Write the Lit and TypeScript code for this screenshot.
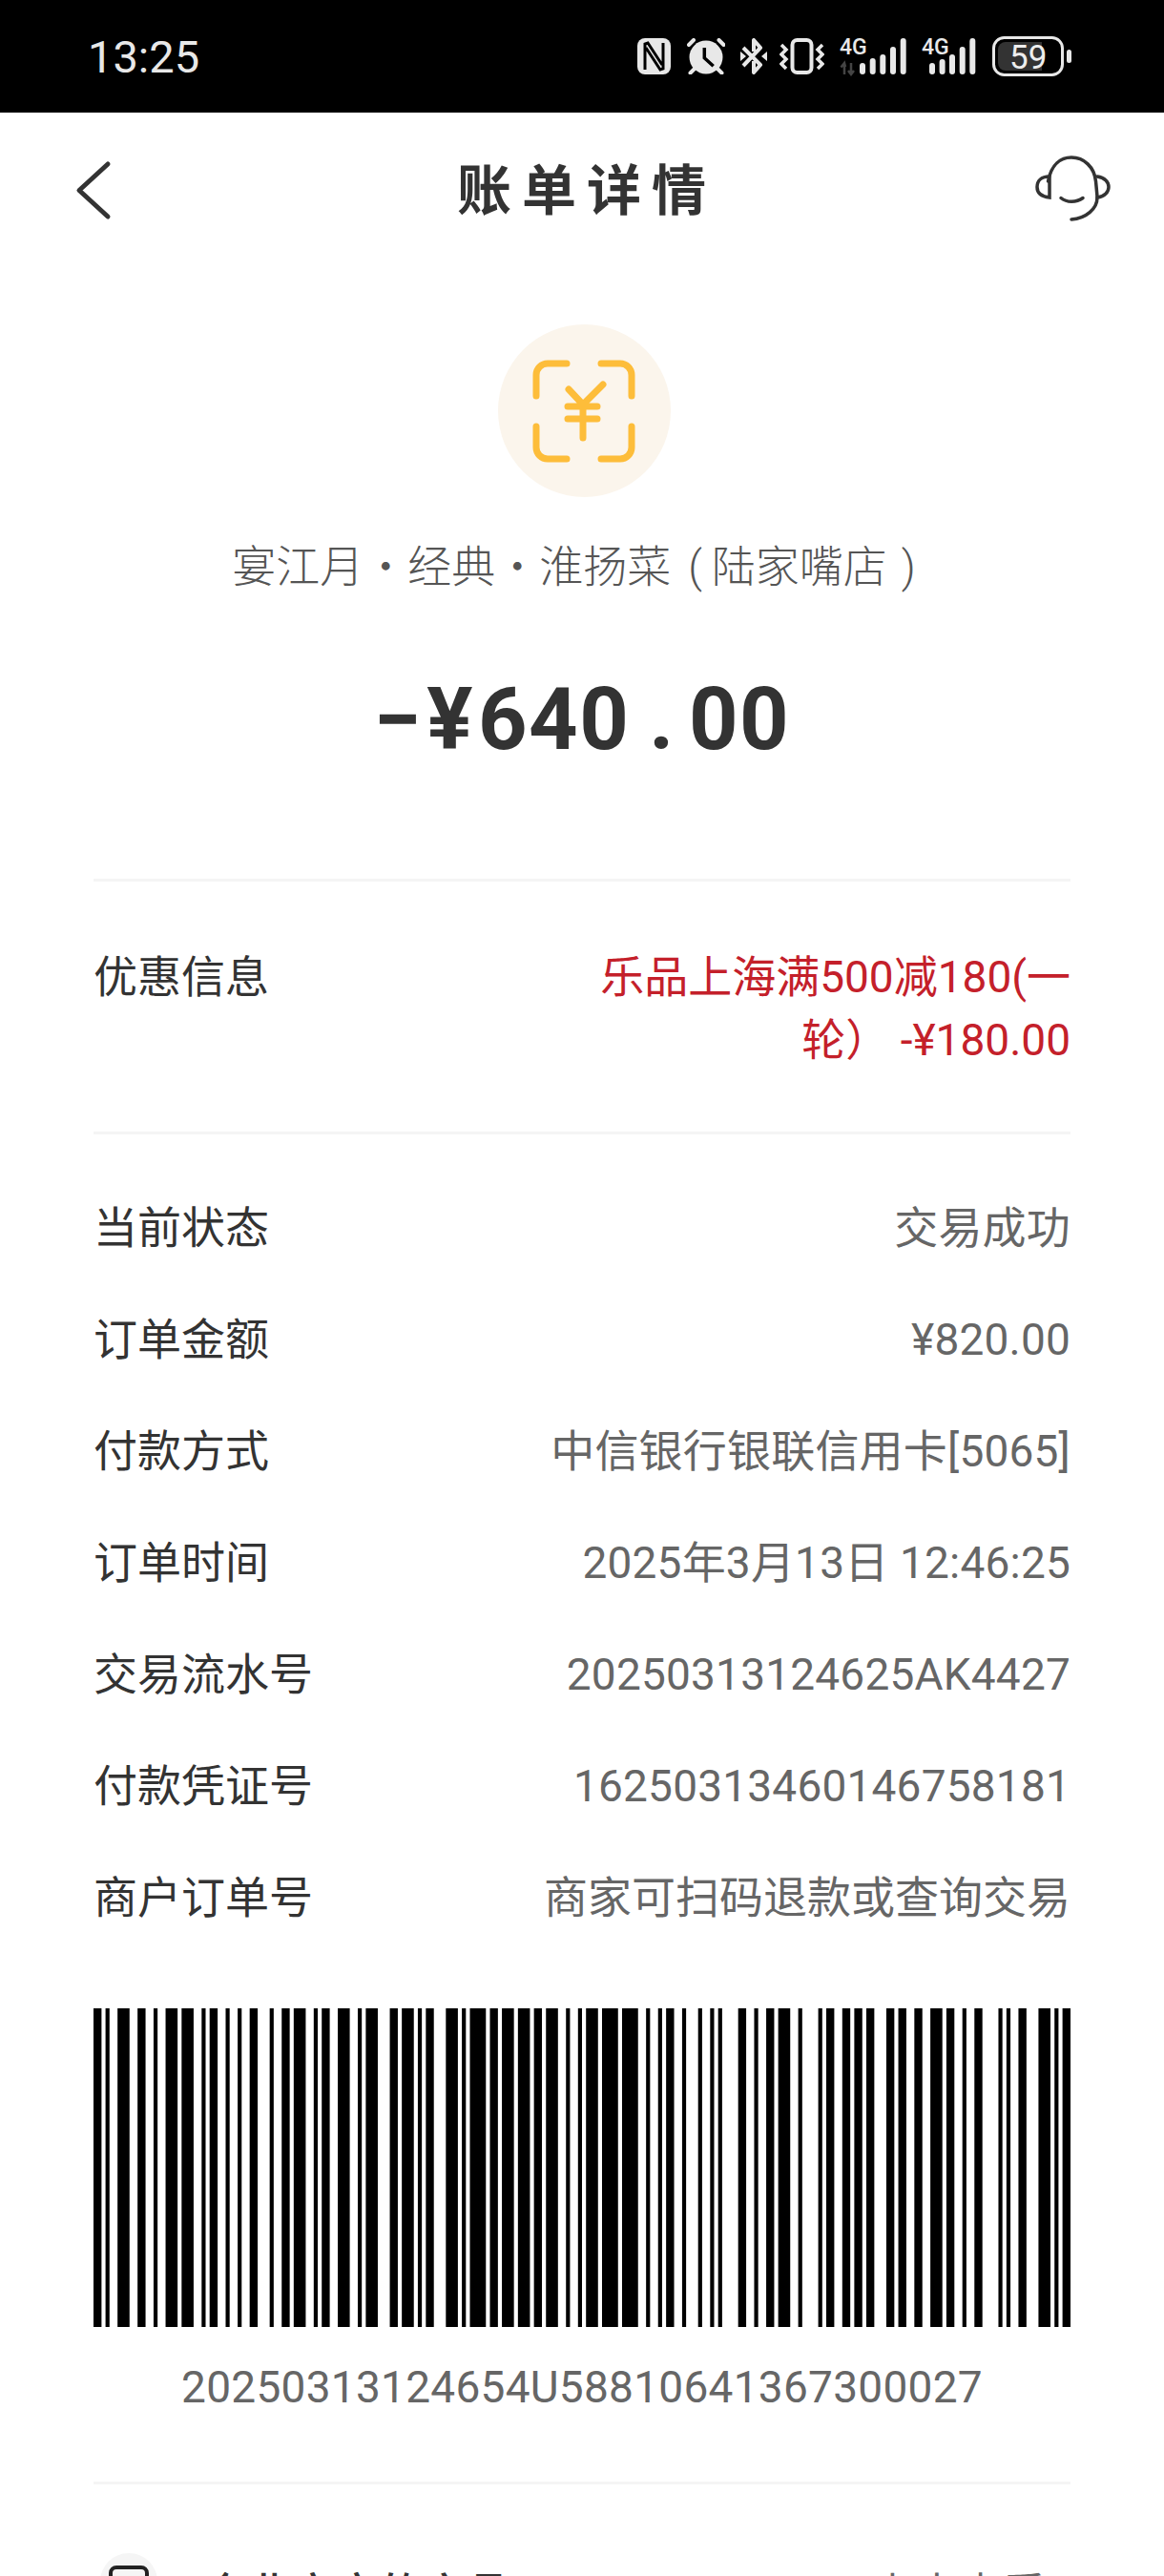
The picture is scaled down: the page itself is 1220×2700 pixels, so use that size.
import { LitElement, html, css, svg } from "lit";
import { customElement } from "lit/decorators.js";

// bar, gap, bar, gap ... in barcode modules
const BARS = [
  2,1,1,2,3,2,2,2,1,2,3,1,3,2,1,1,2,2,1,2,1,2,2,3,1,2,2,1,3,2,1,1,2,2,3,2,1,1,3,3,
  2,1,3,1,1,1,2,3,3,1,1,1,4,1,2,1,3,1,3,1,2,1,3,2,1,2,1,1,3,1,4,1,4,2,1,2,1,1,2,2,
  1,3,1,2,1,1,1,4,2,2,1,2,2,1,3,2,1,4,1,1,2,2,2,1,2,1,2,3,2,1,2,2,2,2,3,1,2,2,1,2,
  2,4,1,1,1,2,2,3,3,1,1,1,2,
];

const ROWS = [
  ["当前状态", "交易成功"],
  ["订单金额", "¥820.00"],
  ["付款方式", "中信银行银联信用卡[5065]"],
  ["订单时间", "2025年3月13日 12:46:25"],
  ["交易流水号", "20250313124625AK4427"],
  ["付款凭证号", "16250313460146758181"],
  ["商户订单号", "商家可扫码退款或查询交易"],
];

@customElement("app-root")
export class AppRoot extends LitElement {
  static styles = css`
    :host {
      display: block;
      width: 1220px;
      height: 2700px;
      overflow: hidden;
      background: #fff;
      font-family: Roboto, "Noto Sans CJK SC", sans-serif;
      font-size: 46px;
      color: #333;
    }

    .status {
      height: 118px;
      background: #000;
      color: #e8e8e8;
      display: flex;
      align-items: center;
      justify-content: space-between;
      padding: 0 97px 0 92px;
      box-sizing: border-box;
    }
    .time { font-size: 47px; }
    .status-icons { display: flex; align-items: center; gap: 16px; }
    .status-icons svg { display: block; fill: #e8e8e8; }
    .status-icons .near { margin-left: -3px; }
    .status-icons text { font-family: Roboto, sans-serif; }

    .nav {
      height: 164px;
      display: grid;
      grid-template-columns: 1fr auto 1fr;
      align-items: center;
      padding: 0 40px 0 78px;
    }
    .nav svg { display: block; fill: none; stroke: #333; stroke-linecap: round; }
    .nav .help { justify-self: end; }
    .title {
      font-size: 57px;
      font-weight: 700;
      letter-spacing: 11px;
      line-height: 64px;
      margin: 2px 0 0 -28px;
    }

    .head { display: flex; flex-direction: column; align-items: center; padding-top: 58px; }
    .badge {
      width: 181px;
      height: 181px;
      margin-left: 4px;
      border-radius: 50%;
      background: #fbf5ec;
      display: flex;
      align-items: center;
      justify-content: center;
    }
    .badge svg { fill: none; stroke: #fdbd3a; stroke-width: 7; stroke-linecap: round; stroke-linejoin: round; }
    .merchant {
      margin-top: 46px;
      font-weight: 300;
      color: #555;
      line-height: 54px;
    }
    .merchant .open { margin: 0 10px 0 18px; }
    .merchant .close { margin: 0 17px 0 15px; }
    .amount {
      margin-top: 81px;
      font-size: 90px;
      font-weight: 700;
      line-height: 106px;
      letter-spacing: 1.5px;
    }
    .amount .sign { margin-right: 4px; }
    .amount .dot { margin: 0 14px 0 20px; }

    .content { padding: 0 98px; }
    .rule { height: 3px; background: #f5f5f5; }
    .rule.top { margin-top: 113px; }

    .promo {
      display: flex;
      justify-content: space-between;
      padding: 67px 0 63px;
      line-height: 66px;
    }
    .promo .red { width: 500px; text-align: right; color: #c4202a; }

    .rows { display: grid; gap: 51px; padding: 65px 0 0; }
    .row { display: flex; justify-content: space-between; line-height: 66px; }
    .row .value { color: #666; }
    .row:not(:last-child) .value { letter-spacing: 0.2px; }

    .barcode { display: block; margin-top: 83px; width: 1024px; height: 334px; fill: #000; }
    .code { text-align: center; color: #666; line-height: 66px; margin-top: 30px; letter-spacing: 0.27px; }
    .rule.last { margin-top: 66px; }

    .more {
      display: flex;
      align-items: flex-start;
      justify-content: space-between;
      padding-top: 72px;
      line-height: 66px;
    }
    .more-left { display: flex; align-items: flex-start; gap: 48px; }
    .more-icon {
      width: 60px;
      height: 60px;
      border-radius: 50%;
      background: #f5f5f5;
      display: flex;
      justify-content: center;
      padding-top: 13px;
      box-sizing: border-box;
      margin-left: 7px;
    }
    .more-icon span {
      display: block;
      width: 42px;
      height: 50px;
      box-sizing: border-box;
      border: 4px solid #222;
      border-radius: 8px;
    }
    .more-name { font-weight: 500; margin-top: 10px; }
    .more-link { color: #666; margin-top: 10px; }
  `;

  private renderBars() {
    let x = 0;
    const rects = BARS.map((w, i) => {
      const at = x;
      x += w;
      return i % 2 === 0 ? svg`<rect x=${at} y="0" width=${w} height="10"></rect>` : null;
    });
    return html`<svg class="barcode" viewBox="0 0 ${x} 10" preserveAspectRatio="none">${rects}</svg>`;
  }

  private renderStatusIcons() {
    return html`
      <div class="status-icons">
        <svg width="36" height="38" viewBox="0 0 36 38">
          <rect x="0" y="0" width="35" height="38" rx="8"></rect>
          <path d="M8 33V6l3-1 15 23M27 5v27l-3 1L9 10" fill="none" stroke="#000" stroke-width="3"></path>
        </svg>
        <svg width="40" height="38" viewBox="0 0 40 38">
          <circle cx="20" cy="20" r="17.5"></circle>
          <path d="M18.3 10v10.7l9.4 8.6" fill="none" stroke="#000" stroke-width="3.5"></path>
          <path d="M2 7l5-5M33.5 2l5 5M3.5 36.5l5-5M31.5 31.5l5 5" fill="none" stroke="#e8e8e8" stroke-width="4" stroke-linecap="round"></path>
        </svg>
        <svg width="28" height="38" viewBox="0 0 28 38">
          <path d="M3 10l18 18-7 8V24M3 29l18-19-7-8v12" fill="none" stroke="#e8e8e8" stroke-width="4" stroke-linejoin="round"></path>
          <path d="M0 14l6 5-6 5zM28 14l-6 5 6 5z"></path>
        </svg>
        <svg class="near" width="47" height="38" viewBox="0 0 47 38">
          <rect x="13.5" y="2" width="20" height="34" rx="5" fill="none" stroke="#e8e8e8" stroke-width="4"></rect>
          <path d="M2 7l5 5-5 5 5 5-5 5 5 5M45 7l-5 5 5 5-5 5 5 5-5 5" fill="none" stroke="#e8e8e8" stroke-width="3.5"></path>
        </svg>
        <svg width="70" height="48" viewBox="0 -4 70 48">
          <text x="0" y="18" font-size="23" font-weight="500" fill="#e8e8e8">4G</text>
          <path d="M5 39V28M1.5 31.5L5 27l1 4M12 27v12M9 35l3 4 3-4" fill="none" stroke="#444" stroke-width="2.5"></path>
          <rect x="21" y="27" width="6" height="12" rx="3"></rect>
          <rect x="31.7" y="22" width="6" height="17" rx="3"></rect>
          <rect x="42.3" y="18" width="6" height="21" rx="3"></rect>
          <rect x="53" y="10" width="6" height="29" rx="3"></rect>
          <rect x="63.7" y="1" width="6" height="38" rx="3"></rect>
        </svg>
        <svg width="58" height="48" viewBox="0 -4 58 48">
          <text x="0" y="18" font-size="23" font-weight="500" fill="#e8e8e8">4G</text>
          <rect x="8" y="27" width="6" height="12" rx="3"></rect>
          <rect x="18.6" y="23" width="6" height="16" rx="3"></rect>
          <rect x="29" y="18" width="6" height="21" rx="3"></rect>
          <rect x="39.7" y="10" width="6" height="29" rx="3"></rect>
          <rect x="50.3" y="1" width="6" height="38" rx="3"></rect>
        </svg>
        <svg width="83" height="42" viewBox="0 0 83 42">
          <rect x="1.5" y="1.5" width="72" height="39" rx="11" fill="none" stroke="#e8e8e8" stroke-width="3"></rect>
          <path d="M14 6H52V36H14a8 8 0 0 1-8-8V14a8 8 0 0 1 8-8z" fill="#333"></path>
          <text x="18" y="34" font-size="35" fill="#eee">59</text>
          <rect x="78" y="14" width="5" height="14" rx="2.5"></rect>
        </svg>
      </div>
    `;
  }

  render() {
    return html`
      <div class="status">
        <span class="time">13:25</span>
        ${this.renderStatusIcons()}
      </div>

      <div class="nav">
        <svg width="40" height="64" viewBox="0 0 40 64" stroke-width="5">
          <path d="M35 4L5 31.500l30 27.500" stroke-linejoin="round"></path>
        </svg>
        <div class="title">账单详情</div>
        <svg class="help" width="110" height="90" viewBox="0 5 110 90" stroke-width="3.500">
          <path d="M28.500 40C32 22 42 15 53 15c13 0 24 10 25.500 25 1.500 15 1.500 17 1.500 17 0 12-12 22-27 23"></path>
          <path d="M30 35c-9 0-13 5-13 11s4 10 13 11z"></path>
          <path d="M80 35c8 1 12 6 12 11s-4 10-12 11"></path>
          <path d="M42 57.500c6 5 16 5 23 0"></path>
        </svg>
      </div>

      <div class="head">
        <div class="badge">
          <svg width="108" height="108" viewBox="0 0 108 108">
            <path d="M36 4H16A12 12 0 0 0 4 16V38M72 4H92a12 12 0 0 1 12 12V38M36 104H16A12 12 0 0 1 4 92V70M72 104H92a12 12 0 0 0 12-12V70"></path>
            <path d="M38 31L53 47 74 26M37 49H68M37 62H68M53 47V82"></path>
          </svg>
        </div>
        <div class="merchant">宴江月・经典・淮扬菜<span class="open">(</span>陆家嘴店<span class="close">)</span></div>
        <div class="amount"><span class="sign">−</span><span class="sign">¥</span>640<span class="dot">.</span>00</div>
      </div>

      <div class="content">
        <div class="rule top"></div>
        <div class="promo">
          <span>优惠信息</span>
          <span class="red">乐品上海满500减180(一轮） -¥180.00</span>
        </div>
        <div class="rule"></div>
        <div class="rows">
          ${ROWS.map(
            ([label, value]) => html`
              <div class="row"><span>${label}</span><span class="value">${value}</span></div>
            `
          )}
        </div>
        ${this.renderBars()}
        <div class="code">20250313124654U58810641367300027</div>
        <div class="rule last"></div>
        <div class="more">
          <div class="more-left">
            <div class="more-icon"><span></span></div>
            <span class="more-name">企业商户的产品</span>
          </div>
          <span class="more-link">点击查看 ›</span>
        </div>
      </div>
    `;
  }
}
